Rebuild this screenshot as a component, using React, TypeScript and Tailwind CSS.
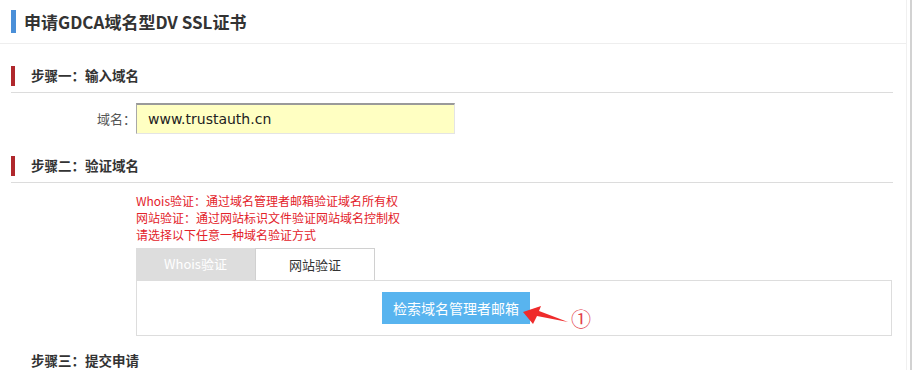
import React from "react";

const cjk = { fontFamily: '"Noto Sans CJK SC", "Noto Sans", sans-serif' };

function StepTitle({ text, bar = true, line = true }: { text: string; bar?: boolean; line?: boolean }) {
  return (
    <div className={`ml-[11px] w-[882px] pb-[6px] ${line ? "border-b border-[#dcdcdc]" : ""}`}>
      <div className="flex h-[20px] items-center">
        <div className={`h-[20px] w-[4px] ${bar ? "bg-[#b0282c]" : ""}`} />
        <span className="ml-[16px] text-[13.5px] font-bold leading-none text-[#333]">{text}</span>
      </div>
    </div>
  );
}

export default function App() {
  return (
    <div className="relative h-[370px] w-[912px] overflow-hidden border-r-2 border-[#d2d2d2] bg-white" style={cjk}>
      <div className="h-full w-[907px] border-r border-[#f0f0f0]">
        {/* Header */}
        <div className="flex h-[44px] items-center border-b border-[#eeeeee] pb-[1px]">
          <div className="ml-[11px] h-[23px] w-[5px] bg-[#4a8fd8]" />
          <h1 className="ml-[8px] text-[17px] font-bold leading-none text-[#333]">申请GDCA域名型DV SSL证书</h1>
        </div>

        {/* Step 1 */}
        <div className="mt-[22px]">
          <StepTitle text="步骤一：输入域名" />
        </div>
        <div className="mt-[10px] flex items-center">
          <label className="w-[136px] text-right text-[13px] text-[#555]">域名：</label>
          <div className="flex h-[31px] w-[319px] items-center border-t-2 border-l border-r border-b border-t-[#9a9a9a] border-l-[#a8a8a8] border-r-[#e4e4e4] border-b-[#e4e4e4] bg-[#ffffc2] pl-[11px]">
            <span className="text-[14px] leading-none text-[#222]" style={{ fontFamily: '"DejaVu Sans", sans-serif' }}>
              www.trustauth.cn
            </span>
          </div>
        </div>

        {/* Step 2 */}
        <div className="mt-[22px]">
          <StepTitle text="步骤二：验证域名" />
        </div>
        <div className="ml-[136px] mt-[9px] text-[12px] leading-[17px] text-[#e3222a]">
          <div>Whois验证：通过域名管理者邮箱验证域名所有权</div>
          <div>网站验证：通过网站标识文件验证网站域名控制权</div>
          <div>请选择以下任意一种域名验证方式</div>
        </div>

        {/* Tabs */}
        <div className="ml-[136px] mt-[5px] flex h-[32px]">
          <div className="flex w-[119px] items-center justify-center bg-[#dddddd] text-[13px] text-white">Whois验证</div>
          <div className="flex w-[120px] items-center justify-center border-t border-r border-l border-[#d0d0d0] bg-white text-[13px] text-[#333]">
            网站验证
          </div>
        </div>
        <div className="relative ml-[136px] h-[56px] w-[756px] border border-[#dddddd] pt-[11px]">
          <button className="ml-[245px] flex h-[32px] w-[148px] items-center justify-center bg-[#58b4ef] text-[14px] text-white">
            检索域名管理者邮箱
          </button>
          <svg className="absolute left-[385px] top-[16px]" width="50" height="28" viewBox="0 0 50 28">
            <polygon points="1,15 19,9 17,14 46,25 15,19 11,27" fill="#ef2b2b" />
          </svg>
          <span className="absolute left-[434px] top-[28px] text-[20px] leading-none text-[#e2404a]">①</span>
        </div>

        {/* Step 3 */}
        <div className="mt-[15px]">
          <StepTitle text="步骤三：提交申请" bar={false} line={false} />
        </div>
      </div>
    </div>
  );
}
